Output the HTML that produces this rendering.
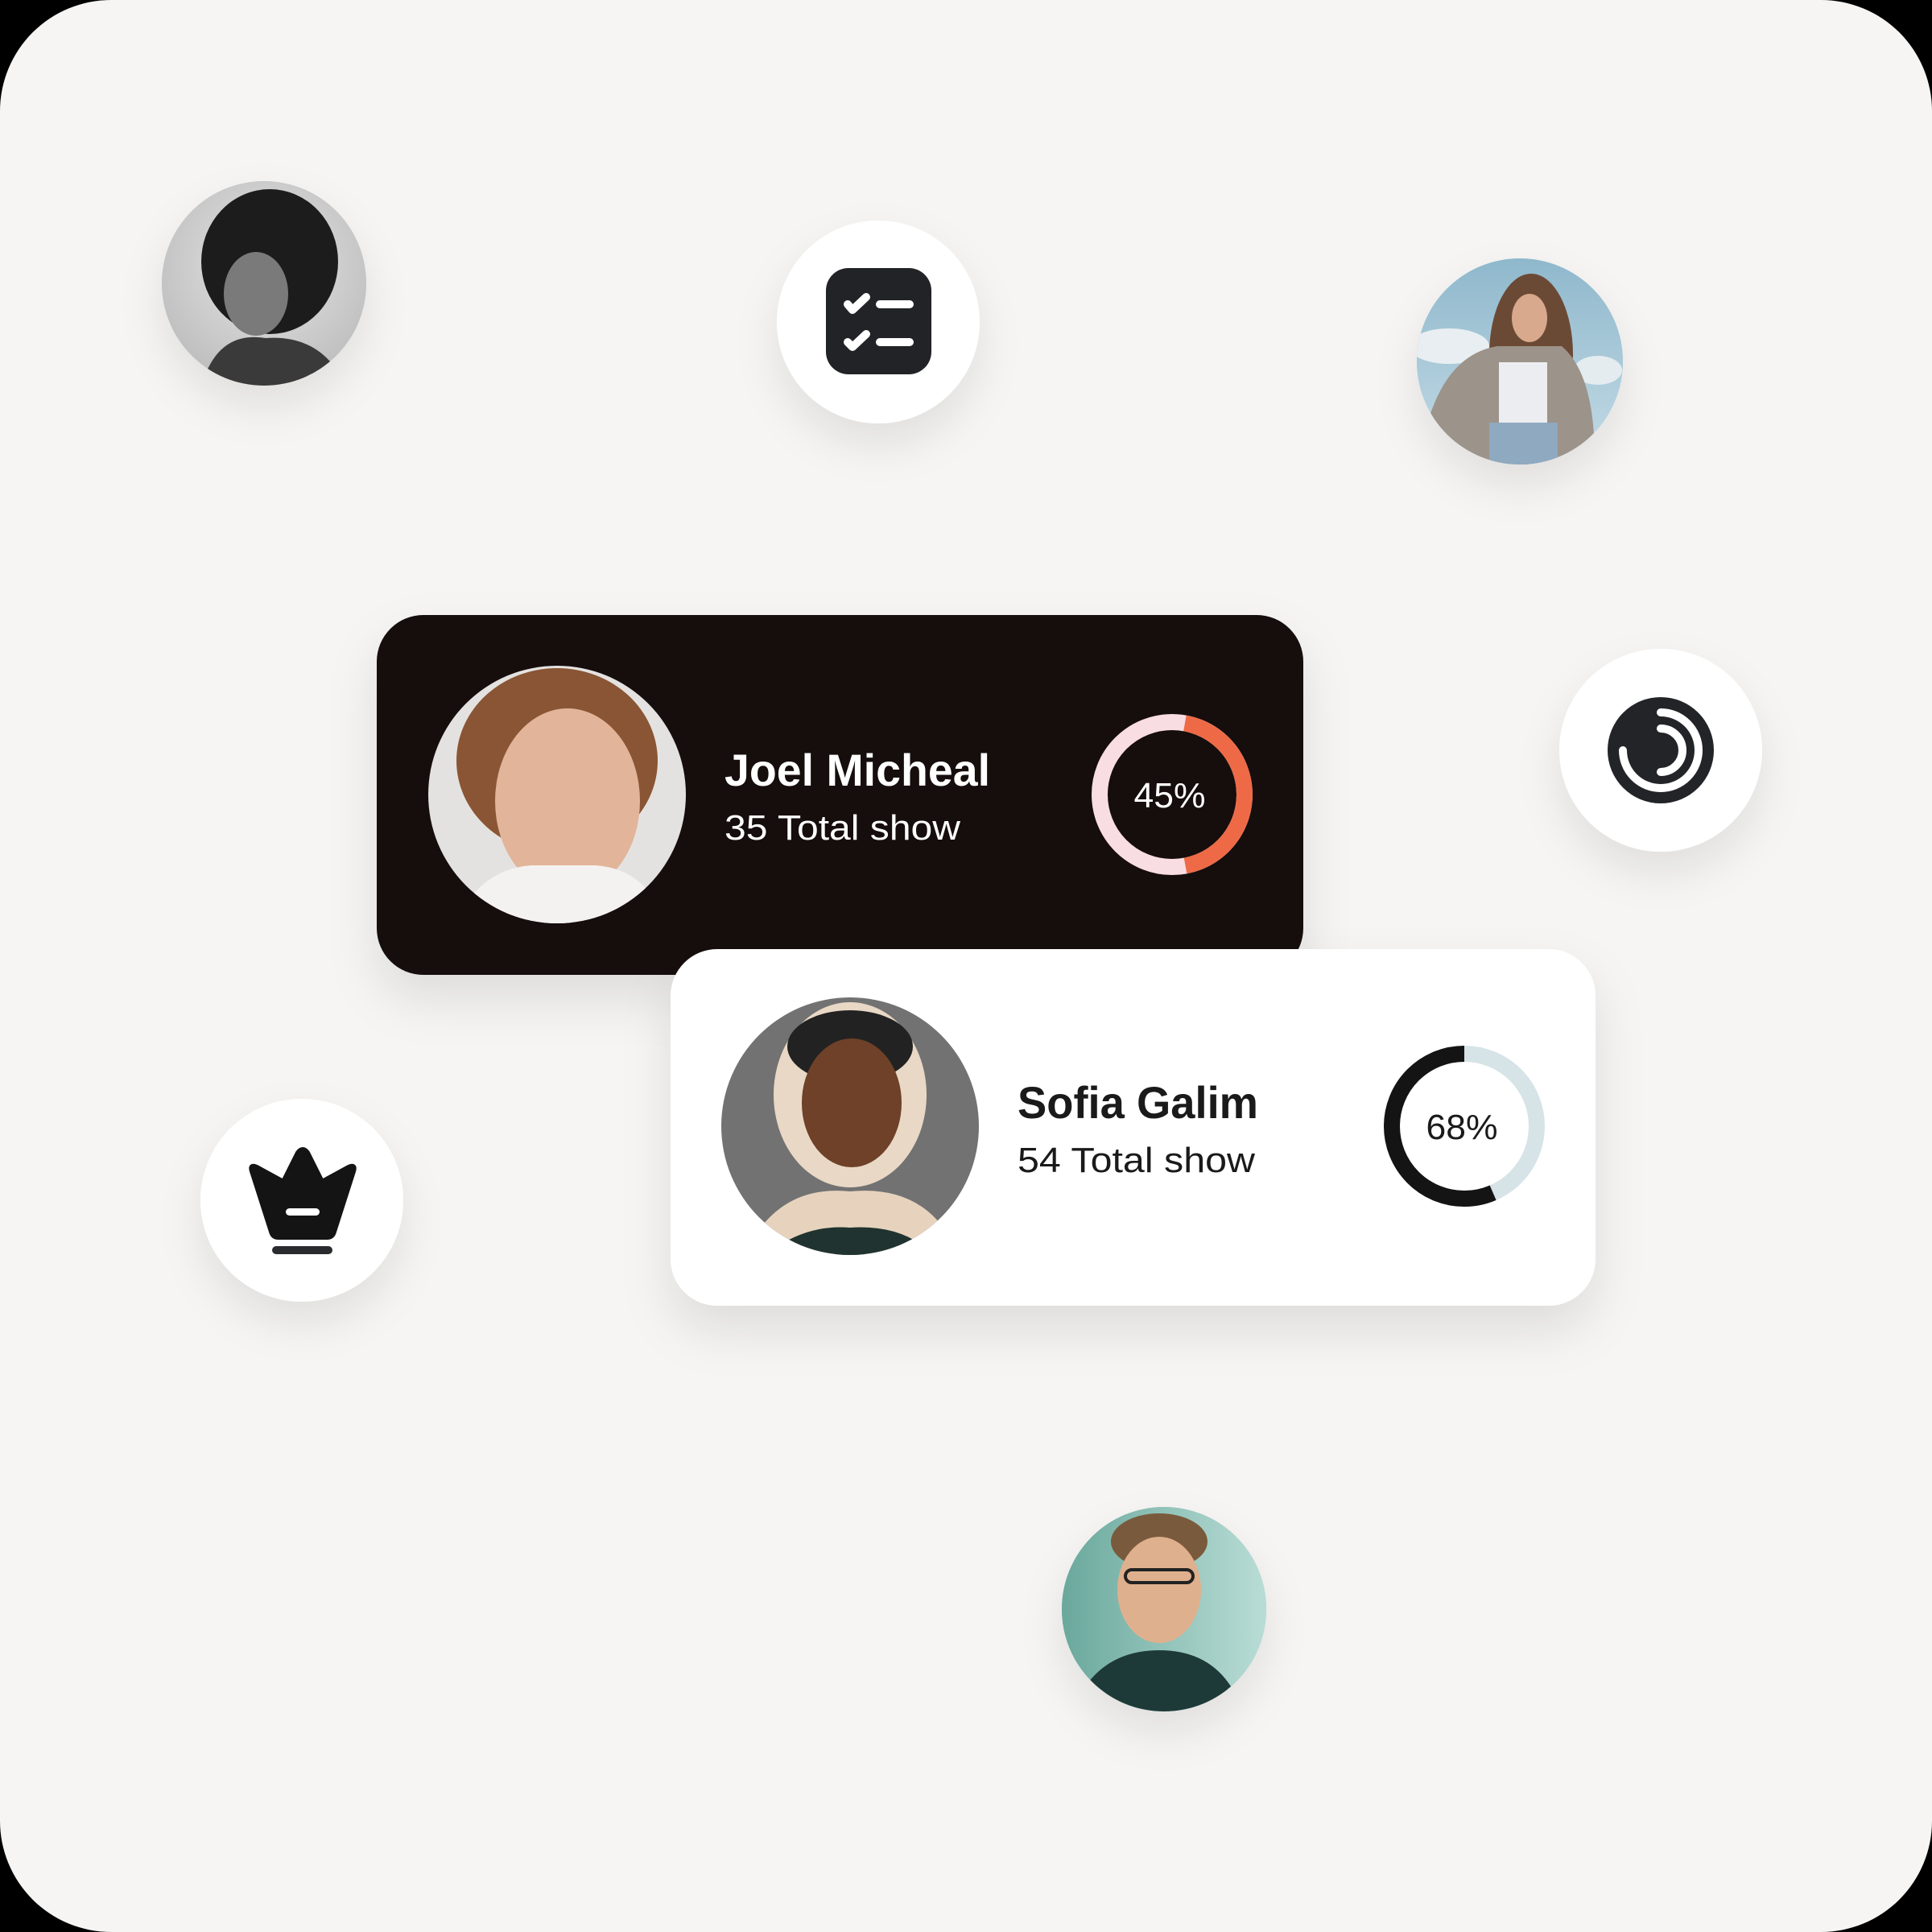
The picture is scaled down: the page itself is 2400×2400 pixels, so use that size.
<!DOCTYPE html>
<html><head><meta charset="utf-8"><style>
html,body{margin:0;padding:0;background:#000;width:2400px;height:2400px;overflow:hidden}
svg{display:block}
text{font-family:"Liberation Sans",sans-serif}
</style></head><body>
<svg width="2400" height="2400" viewBox="0 0 2400 2400" xmlns="http://www.w3.org/2000/svg">
<defs>
<filter id="sh" x="-50%" y="-50%" width="200%" height="200%"><feDropShadow dx="0" dy="26" stdDeviation="26" flood-color="#000" flood-opacity="0.09"/></filter>
<filter id="shc" x="-20%" y="-30%" width="140%" height="170%"><feDropShadow dx="0" dy="30" stdDeviation="30" flood-color="#000" flood-opacity="0.10"/></filter>
<clipPath id="c1"><circle cx="328" cy="352" r="127"/></clipPath>
<clipPath id="c2"><circle cx="1888" cy="449" r="128"/></clipPath>
<clipPath id="c3"><circle cx="692" cy="987" r="160"/></clipPath>
<clipPath id="c4"><circle cx="1056" cy="1399" r="160"/></clipPath>
<clipPath id="c5"><circle cx="1446" cy="1999" r="127"/></clipPath>
<radialGradient id="g1" cx="0.5" cy="0.4" r="0.6"><stop offset="0" stop-color="#e6e6e6"/><stop offset="1" stop-color="#bdbdbd"/></radialGradient>
<linearGradient id="g2" x1="0" y1="0" x2="0" y2="1"><stop offset="0" stop-color="#8fb8cc"/><stop offset="1" stop-color="#c4dbe6"/></linearGradient>
<linearGradient id="g5" x1="0" y1="0" x2="1" y2="0"><stop offset="0" stop-color="#6aa89c"/><stop offset="1" stop-color="#b9ddd6"/></linearGradient>
</defs>
<rect x="0" y="0" width="2400" height="2400" rx="138" fill="#f6f5f3"/>

<!-- avatar 1 BW -->
<g filter="url(#sh)"><circle cx="328" cy="352" r="127" fill="#cfcfcf"/></g>
<g clip-path="url(#c1)">
<rect x="200" y="225" width="260" height="260" fill="url(#g1)"/>
<ellipse cx="335" cy="325" rx="85" ry="90" fill="#1c1c1c"/>
<ellipse cx="318" cy="365" rx="40" ry="52" fill="#7a7a7a"/>
<path d="M250 480 Q270 410 330 420 Q400 415 430 480 Z" fill="#3a3a3a"/>
</g>

<!-- checklist icon -->
<g filter="url(#sh)"><circle cx="1091" cy="400" r="126" fill="#fff"/></g>
<rect x="1026" y="333" width="131" height="132" rx="28" fill="#222326"/>
<g stroke="#fff" stroke-width="10" stroke-linecap="round" stroke-linejoin="round" fill="none">
<path d="M1053 378 L1059 385 L1076 369"/>
<path d="M1053 425 L1059 431 L1076 415"/>
<path d="M1093 378 H1130"/>
<path d="M1093 425 H1130"/>
</g>

<!-- avatar 2 -->
<g filter="url(#sh)"><circle cx="1888" cy="449" r="128" fill="#aacbdc"/></g>
<g clip-path="url(#c2)">
<rect x="1760" y="321" width="256" height="256" fill="url(#g2)"/>
<ellipse cx="1800" cy="430" rx="50" ry="22" fill="#e8eef2"/>
<ellipse cx="1985" cy="460" rx="30" ry="18" fill="#e4ecf0"/>
<ellipse cx="1902" cy="440" rx="52" ry="100" fill="#6b4a35"/>
<ellipse cx="1900" cy="395" rx="22" ry="30" fill="#d8a98c"/>
<path d="M1775 520 Q1800 440 1860 430 L1940 430 Q1975 460 1980 540 L1980 580 L1790 580 Z" fill="#9c938a"/>
<rect x="1862" y="450" width="60" height="80" fill="#ecedf0"/>
<rect x="1850" y="525" width="85" height="60" fill="#8fa9c0"/>
</g>

<!-- dark card -->
<g filter="url(#shc)"><rect x="468" y="764" width="1151" height="447" rx="58" fill="#120e0f"/></g>
<g clip-path="url(#c3)">
<rect x="530" y="825" width="330" height="330" fill="#e4e2e0"/>
<ellipse cx="692" cy="945" rx="125" ry="115" fill="#8a5534"/>
<ellipse cx="705" cy="995" rx="90" ry="115" fill="#e2b49a"/>
<path d="M560 1160 Q590 1080 660 1075 L740 1075 Q810 1080 830 1160 Z" fill="#f4f2f0"/>
</g>
<text x="900" y="976" fill="#fff" font-size="56" font-weight="bold" textLength="330" lengthAdjust="spacingAndGlyphs">Joel Micheal</text>
<text x="900" y="1043" fill="#fff" font-size="44" textLength="293" lengthAdjust="spacingAndGlyphs">35 Total show</text>
<g transform="rotate(-90 1456 987)" fill="none" stroke-width="20">
<circle cx="1456" cy="987" r="90" stroke="#f8dde2"/>
<circle cx="1456" cy="987" r="90" stroke="#ee6a46" stroke-dasharray="250 566" stroke-dashoffset="-16"/>
</g>
<text x="1453" y="1003" fill="#fff" font-size="44" text-anchor="middle" textLength="89" lengthAdjust="spacingAndGlyphs">45%</text>

<!-- spinner icon -->
<g filter="url(#sh)"><circle cx="2063" cy="932" r="126" fill="#fff"/></g>
<circle cx="2063" cy="932" r="66" fill="#222428"/>
<g stroke="#fff" stroke-width="10" stroke-linecap="round" fill="none">
<path d="M2063 885 A47 47 0 1 1 2016 932"/>
<path d="M2063 905 A27 27 0 0 1 2063 959"/>
</g>

<!-- white card -->
<g filter="url(#shc)"><rect x="833" y="1179" width="1149" height="443" rx="58" fill="#fff"/></g>
<g clip-path="url(#c4)">
<rect x="894" y="1237" width="330" height="330" fill="#727272"/>
<ellipse cx="1056" cy="1360" rx="95" ry="115" fill="#e9d8c6"/>
<ellipse cx="1056" cy="1300" rx="78" ry="45" fill="#222"/>
<ellipse cx="1058" cy="1370" rx="62" ry="80" fill="#6e4128"/>
<path d="M920 1570 Q960 1470 1056 1480 Q1160 1470 1195 1570 Z" fill="#e7d3bd"/>
<path d="M940 1570 Q990 1520 1056 1525 Q1130 1520 1170 1570 Z" fill="#203330"/>
</g>
<text x="1264" y="1389" fill="#1a1a1a" font-size="56" font-weight="bold" textLength="299" lengthAdjust="spacingAndGlyphs">Sofia Galim</text>
<text x="1264" y="1456" fill="#1a1a1a" font-size="44" textLength="295" lengthAdjust="spacingAndGlyphs">54 Total show</text>
<g transform="rotate(-90 1819 1399)" fill="none" stroke-width="20">
<circle cx="1819" cy="1399" r="90" stroke="#d6e3e7"/>
<circle cx="1819" cy="1399" r="90" stroke="#141414" stroke-dasharray="320 566" stroke-dashoffset="-246"/>
</g>
<text x="1816" y="1415" fill="#1a1a1a" font-size="44" text-anchor="middle" textLength="89" lengthAdjust="spacingAndGlyphs">68%</text>

<!-- crown icon -->
<g filter="url(#sh)"><circle cx="375" cy="1491" r="126" fill="#fff"/></g>
<path d="M313 1455 Q310 1446 319 1450 L352 1468 L370 1432 Q376 1424 382 1432 L400 1468 L433 1450 Q442 1446 439 1455 L415 1530 Q413 1537 406 1537 L346 1537 Q339 1537 337 1530 Z" fill="#141414" stroke="#141414" stroke-width="6" stroke-linejoin="round"/>
<rect x="355" y="1501" width="42" height="9" rx="4.5" fill="#fff"/>
<rect x="338" y="1548" width="75" height="10" rx="5" fill="#2a2b2e"/>

<!-- avatar 5 -->
<g filter="url(#sh)"><circle cx="1446" cy="1999" r="127" fill="#7fb8ad"/></g>
<g clip-path="url(#c5)">
<rect x="1318" y="1871" width="256" height="256" fill="url(#g5)"/>
<ellipse cx="1440" cy="1915" rx="60" ry="35" fill="#7a5a3c"/>
<ellipse cx="1440" cy="1975" rx="52" ry="66" fill="#dfb08e"/>
<rect x="1398" y="1950" width="84" height="16" rx="8" fill="none" stroke="#222" stroke-width="4"/>
<path d="M1330 2130 Q1360 2050 1440 2050 Q1520 2050 1545 2130 Z" fill="#1e3a38"/>
</g>
</svg>
</body></html>
